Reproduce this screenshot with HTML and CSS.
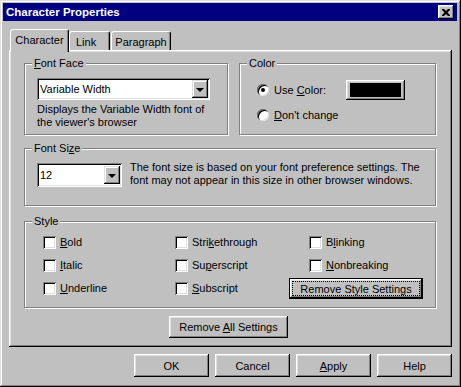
FILE: index.html
```html
<!DOCTYPE html>
<html lang="en">

<head>
    <meta charset="UTF-8">
    <title>Character Properties</title>
    <link rel="stylesheet" href="styles.css">
</head>

<body>
    <div class="window">
        <div class="titlebar">
            <span class="title">Character Properties</span>
            <button class="close">
                <svg width="8" height="7" viewBox="0 0 8 7">
                    <path d="M0 0h2l2 2 2-2h2v1l-2.5 2.5L8 6v1H6L4 5 2 7H0V6l2.5-2.5L0 1z" fill="#000" />
                </svg>
            </button>
        </div>
        <div class="client">
            <div class="tabs">
                <div class="tab active">Character</div>
                <div class="tab link">Link</div>
                <div class="tab para">Paragraph</div>
            </div>
            <div class="panel">
                <div class="row">
                    <div class="group face">
                        <span class="legend"><u>F</u>ont Face</span>
                        <div class="select wide">
                            <span class="value">Variable Width</span>
                            <span class="arrow"></span>
                        </div>
                        <p class="hint">Displays the Variable Width font of the viewer's browser</p>
                    </div>
                    <div class="group color">
                        <span class="legend">Color</span>
                        <div class="radio-row">
                            <span class="radio checked"></span>
                            <span class="label">Use <u>C</u>olor:</span>
                            <button class="btn swatch"><span></span></button>
                        </div>
                        <div class="radio-row">
                            <span class="radio"></span>
                            <span class="label"><u>D</u>on't change</span>
                        </div>
                    </div>
                </div>
                <div class="group size">
                    <span class="legend">Font Si<u>z</u>e</span>
                    <div class="select narrow">
                        <span class="value">12</span>
                        <span class="arrow"></span>
                    </div>
                    <p class="note">The font size is based on your font preference settings. The font may not appear in this size in other browser windows.</p>
                </div>
                <div class="group style">
                    <span class="legend">Style</span>
                    <div class="checks">
                        <label class="check"><span class="box"></span><u>B</u>old</label>
                        <label class="check"><span class="box"></span>Stri<u>k</u>ethrough</label>
                        <label class="check col3"><span class="box"></span>B<u>l</u>inking</label>
                        <label class="check"><span class="box"></span><u>I</u>talic</label>
                        <label class="check"><span class="box"></span>Su<u>p</u>erscript</label>
                        <label class="check col3"><span class="box"></span><u>N</u>onbreaking</label>
                        <label class="check"><span class="box"></span><u>U</u>nderline</label>
                        <label class="check"><span class="box"></span><u>S</u>ubscript</label>
                        <button class="btn default"><span class="focus">Remove Style Settings</span></button>
                    </div>
                </div>
                <div class="center">
                    <button class="btn remove-all">Remove <u>A</u>ll Settings</button>
                </div>
            </div>
            <div class="actions">
                <button class="btn">OK</button>
                <button class="btn">Cancel</button>
                <button class="btn"><u>A</u>pply</button>
                <button class="btn">Help</button>
            </div>
        </div>
    </div>
</body>

</html>
```

FILE: styles.css
```css
body {
    margin: 0;
    font-family: 'Liberation Sans', Arial, sans-serif;
    font-size: 11px;
    color: #000;
    background-color: #c0c0c0;
}

u {
    text-decoration-thickness: 1px;
    text-underline-offset: 1px;
}

.window {
    width: 461px;
    height: 387px;
    box-sizing: border-box;
    padding: 3px;
    background-color: #c0c0c0;
    box-shadow: inset -1px -1px #000, inset 1px 1px #dfdfdf, inset -2px -2px #808080, inset 2px 2px #fff;
}

.titlebar {
    height: 18px;
    margin-right: 1px;
    background-color: #000080;
    color: #fff;
    display: flex;
    justify-content: space-between;
    align-items: center;
    padding: 0 3px 0 3px;
}

.title {
    font-weight: bold;
    font-size: 11.5px;
}

.close {
    width: 16px;
    height: 14px;
    padding: 0;
    border: none;
    background-color: #c0c0c0;
    box-shadow: inset -1px -1px #000, inset 1px 1px #fff, inset -2px -2px #808080, inset 2px 2px #dfdfdf;
    display: flex;
    align-items: center;
    justify-content: center;
}

.client {
    padding: 8px 6px 0 6px;
}

/* tab strip */
.tabs {
    display: flex;
    align-items: flex-end;
    height: 21px;
    position: relative;
    z-index: 1;
}

.tab {
    height: 19px;
    box-sizing: border-box;
    border-top: 1px solid #fff;
    border-left: 1px solid #fff;
    border-right: 1px solid #000;
    border-radius: 3px 3px 0 0;
    box-shadow: inset -1px 0 #808080;
    display: flex;
    align-items: center;
    justify-content: center;
    padding-top: 1px;
}

.tab.active {
    height: 23px;
    width: 59px;
    margin-left: 1px;
    margin-bottom: -2px;
    background-color: #c0c0c0;
    padding-bottom: 3px;
}

.tab.link {
    width: 41px;
    justify-content: flex-start;
    padding-left: 6px;
}

.tab.para {
    width: 60px;
    margin-left: 1px;
}

.panel {
    height: 297px;
    box-sizing: border-box;
    padding: 13px 16px 0 15px;
    box-shadow: inset -1px -1px #000, inset 1px 1px #fff, inset -2px -2px #808080, inset 2px 2px #dfdfdf;
}

/* group boxes */
.group {
    position: relative;
    box-sizing: border-box;
    border: 1px solid #808080;
    box-shadow: 1px 1px 0 #fff, inset 1px 1px 0 #fff;
}

.legend {
    position: absolute;
    top: -8px;
    left: 7px;
    padding: 0 2px;
    background-color: #c0c0c0;
    line-height: 14px;
}

.row {
    display: flex;
    gap: 11px;
    height: 72px;
}

.row .group {
    flex: 1 1 0;
    min-width: 0;
}

.face {
    padding: 14px 12px 0 12px;
}

.select {
    height: 22px;
    background-color: #fff;
    box-sizing: border-box;
    box-shadow: inset 1px 1px #808080, inset -1px -1px #fff, inset 2px 2px #000, inset -2px -2px #dfdfdf;
    display: flex;
    justify-content: space-between;
    align-items: center;
    padding: 2px;
}

.select.wide {
    width: 173px;
}

.select .value {
    padding-left: 1px;
}

.arrow {
    width: 16px;
    height: 18px;
    box-sizing: border-box;
    background-color: #c0c0c0;
    box-shadow: inset -1px -1px #000, inset 1px 1px #dfdfdf, inset -2px -2px #808080, inset 2px 2px #fff;
    display: flex;
    align-items: center;
    justify-content: center;
}

.arrow::after {
    content: "";
    border-left: 4px solid transparent;
    border-right: 4px solid transparent;
    border-top: 4px solid #000;
    margin-top: 1px;
}

.hint {
    margin: 3px 0 0 0;
    line-height: 13px;
}

.color {
    padding: 13px 0 0 17px;
}

.radio-row {
    display: flex;
    align-items: center;
    height: 25px;
}

.radio {
    width: 12px;
    height: 12px;
    border-radius: 50%;
    background-color: #fff;
    box-shadow: inset 1px 1px #808080, inset -1px -1px #dfdfdf, inset 2px 2px #000;
    position: relative;
    margin-right: 5px;
}

.radio.checked::after {
    content: "";
    position: absolute;
    left: 4px;
    top: 4px;
    width: 4px;
    height: 4px;
    border-radius: 50%;
    background-color: #000;
}

.btn {
    font-family: inherit;
    font-size: 11px;
    color: #000;
    background-color: #c0c0c0;
    border: none;
    padding: 0;
    box-shadow: inset -1px -1px #000, inset 1px 1px #fff, inset -2px -2px #808080, inset 2px 2px #dfdfdf;
}

.btn.swatch {
    width: 59px;
    height: 20px;
    margin-left: 20px;
    padding: 3px 4px;
    box-sizing: border-box;
    display: flex;
}

.btn.swatch span {
    flex: 1;
    background-color: #000;
}

/* font size */
.size {
    margin-top: 13px;
    height: 58px;
    display: flex;
    align-items: flex-start;
    padding: 14px 0 0 12px;
}

.select.narrow {
    width: 85px;
    height: 24px;
}

.note {
    margin: -2px 0 0 8px;
    width: 290px;
    line-height: 13px;
}

/* style checkboxes */
.style {
    margin-top: 15px;
    height: 87px;
    padding: 14px 0 0 18px;
}

.checks {
    display: grid;
    grid-template-columns: 132px 114px 134px;
    grid-auto-rows: 23px;
}

.check {
    display: flex;
    align-items: flex-start;
    line-height: 13px;
}

.check.col3 {
    padding-left: 20px;
}

.box {
    width: 13px;
    height: 13px;
    box-sizing: border-box;
    background-color: #fff;
    box-shadow: inset 1px 1px #808080, inset -1px -1px #fff, inset 2px 2px #000, inset -2px -2px #dfdfdf;
    margin-right: 4px;
}

.btn.default {
    width: 134px;
    height: 21px;
    margin-top: -4px;
    border: 1px solid #000;
    box-sizing: border-box;
    padding: 3px;
    display: flex;
}

.focus {
    flex: 1;
    outline: 1px dotted #000;
    display: flex;
    align-items: center;
    justify-content: center;
}

.center {
    display: flex;
    justify-content: center;
    margin-top: 8px;
    padding-right: 3px;
}

.btn.remove-all {
    width: 119px;
    height: 22px;
}

.actions {
    display: flex;
    justify-content: flex-end;
    gap: 6px;
    margin-top: 7px;
}

.actions .btn {
    width: 75px;
    height: 23px;
}
```
